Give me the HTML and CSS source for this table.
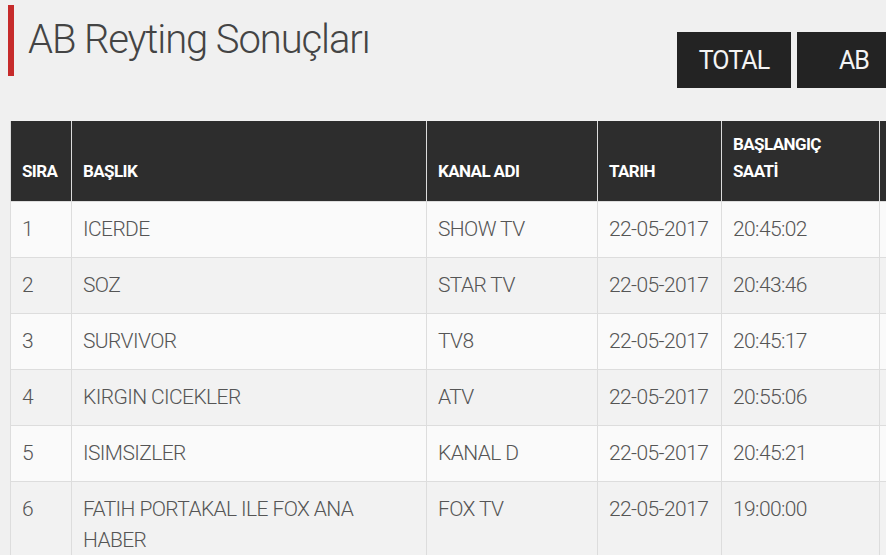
FILE: index.html
```html
<!DOCTYPE html>
<html lang="tr">
<head>
<meta charset="utf-8">
<link rel="stylesheet" href="styles.css">
</head>
<body>
<div class="page">
  <div class="top">
    <h1 class="title">AB Reyting Sonuçları</h1>
    <div class="tabs">
      <span class="tab">TOTAL</span>
      <span class="tab tab-ab">AB</span>
    </div>
  </div>
  <table class="grid">
    <colgroup>
      <col class="c1"><col class="c2"><col class="c3"><col class="c4"><col class="c5"><col class="c6">
    </colgroup>
    <thead>
      <tr><th>SIRA</th><th>BAŞLIK</th><th>KANAL ADI</th><th>TARIH</th><th>BAŞLANGIÇ SAATİ</th><th></th></tr>
    </thead>
    <tbody>
      <tr><td>1</td><td>ICERDE</td><td>SHOW TV</td><td>22-05-2017</td><td>20:45:02</td><td></td></tr>
      <tr><td>2</td><td>SOZ</td><td>STAR TV</td><td>22-05-2017</td><td>20:43:46</td><td></td></tr>
      <tr><td>3</td><td>SURVIVOR</td><td>TV8</td><td>22-05-2017</td><td>20:45:17</td><td></td></tr>
      <tr><td>4</td><td>KIRGIN CICEKLER</td><td>ATV</td><td>22-05-2017</td><td>20:55:06</td><td></td></tr>
      <tr><td>5</td><td>ISIMSIZLER</td><td>KANAL D</td><td>22-05-2017</td><td>20:45:21</td><td></td></tr>
      <tr><td>6</td><td>FATIH PORTAKAL ILE FOX ANA HABER</td><td>FOX TV</td><td>22-05-2017</td><td>19:00:00</td><td></td></tr>
    </tbody>
  </table>
</div>
</body>
</html>
```
FILE: styles.css
```css
html, body {
  margin: 0;
  padding: 0;
  background: #f0f0f0;
  overflow: hidden;
}
body {
  width: 886px;
  height: 555px;
  font-family: Roboto, "Liberation Sans", sans-serif;
  color: #555;
}
.page {
  width: 1100px;
  padding: 5px 0 0 8px;
}
.top {
  display: flex;
  align-items: flex-start;
  height: 116px;
}
.title {
  margin: 0;
  width: 669px;
  border-left: 6px solid #c62b2b;
  padding-left: 14px;
  height: 71px;
  font-weight: 300;
  font-size: 40px;
  line-height: 70px;
  color: #444;
  letter-spacing: -1.1px;
  box-sizing: border-box;
}
.tabs {
  display: flex;
  gap: 6px;
  margin-top: 27px;
}
.tab {
  display: flex;
  align-items: center;
  justify-content: center;
  height: 56px;
  width: 114px;
  background: #232323;
  color: #f4f4f4;
  font-size: 25px;
  letter-spacing: -0.9px;
  font-weight: 400;
}
.tab-ab {
  width: 114px;
}
.grid {
  margin-left: 2px;
  border-collapse: collapse;
  table-layout: fixed;
  width: 1000px;
}
.c1 { width: 61px; }
.c2 { width: 355px; }
.c3 { width: 171px; }
.c4 { width: 124px; }
.c5 { width: 158px; }
.c6 { width: 131px; }
.grid th {
  background: #2d2d2d;
  color: #fff;
  font-weight: 700;
  font-size: 17px;
  letter-spacing: -0.6px;
  text-align: left;
  vertical-align: bottom;
  padding: 0 12px 16px 11px;
  height: 80px;
  box-sizing: border-box;
  line-height: 27px;
  border: 1px solid #dcdcdc;
  border-top: none;
  border-bottom: none;
}
.grid td {
  font-weight: 300;
  font-size: 21px;
  letter-spacing: -0.6px;
  color: #555;
  vertical-align: top;
  padding: 12px 12px 12px 11px;
  line-height: 31px;
  border: 1px solid #dddddd;
}
.grid tbody tr:nth-child(odd) td { background: #fafafa; }
.grid tbody tr:nth-child(even) td { background: #f2f2f2; }
```
